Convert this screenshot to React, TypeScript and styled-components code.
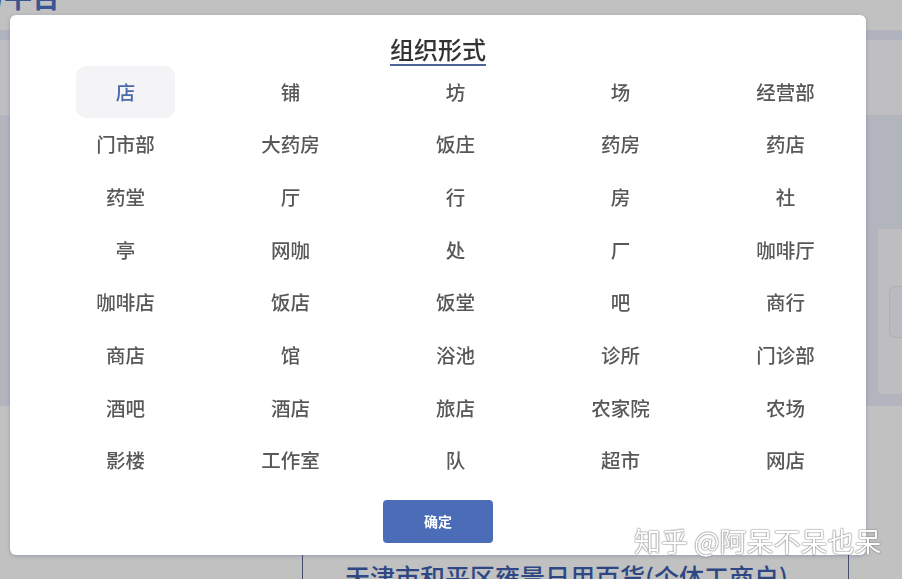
import { useState } from "react";
import styled, { createGlobalStyle } from "styled-components";

const GlobalStyle = createGlobalStyle`
  html, body {
    margin: 0;
    padding: 0;
    width: 902px;
    height: 579px;
    overflow: hidden;
    font-family: "Noto Sans CJK SC", "Noto Sans", sans-serif;
    background: #ffffff;
  }
`;

const options = [
  "店", "铺", "坊", "场", "经营部",
  "门市部", "大药房", "饭庄", "药房", "药店",
  "药堂", "厅", "行", "房", "社",
  "亭", "网咖", "处", "厂", "咖啡厅",
  "咖啡店", "饭店", "饭堂", "吧", "商行",
  "商店", "馆", "浴池", "诊所", "门诊部",
  "酒吧", "酒店", "旅店", "农家院", "农场",
  "影楼", "工作室", "队", "超市", "网店",
];

export default function App() {
  const [selected, setSelected] = useState("店");

  return (
    <>
      <GlobalStyle />
      <Page>
        <Header>
          <PlatformTitle>服务平台</PlatformTitle>
        </Header>
        <NavBand />
        <Toolbar />
        <Panel>
          <SideCard>
            <SideTab />
          </SideCard>
        </Panel>
        <Bottom>
          <ShopBox>
            <ShopName>天津市和平区雍景日用百货(个体工商户)</ShopName>
          </ShopBox>
        </Bottom>
      </Page>

      <Overlay>
        <Modal>
          <TitleRow>
            <Title>组织形式</Title>
          </TitleRow>
          <OptionGrid>
            {options.map((name) => (
              <Option
                key={name}
                $active={name === selected}
                onClick={() => setSelected(name)}
              >
                {name}
              </Option>
            ))}
          </OptionGrid>
          <Footer>
            <ConfirmButton>确定</ConfirmButton>
          </Footer>
        </Modal>
      </Overlay>

      <Watermark>知乎 @阿呆不呆也呆</Watermark>
    </>
  );
}

const Page = styled.div`
  display: flex;
  flex-direction: column;
  width: 902px;
  height: 579px;
  background: #ffffff;
`;

const Header = styled.div`
  height: 30px;
  display: flex;
  align-items: flex-end;
  overflow: hidden;
`;

const PlatformTitle = styled.div`
  margin-left: -52px;
  margin-bottom: 20px;
  font-size: 28px;
  line-height: 28px;
  font-weight: 700;
  color: #4d6fc0;
`;

const NavBand = styled.div`
  height: 10px;
  background: #e9edfb;
`;

const Toolbar = styled.div`
  height: 75px;
  background: #fdfdff;
  border-bottom: 1px solid #eef0f6;
`;

const Panel = styled.div`
  height: 290px;
  background: #ebeffc;
  display: flex;
  justify-content: flex-end;
  align-items: flex-end;
  padding-bottom: 12px;
  box-sizing: border-box;
`;

const SideCard = styled.div`
  width: 24px;
  height: 165px;
  background: #fcfcfe;
  border-radius: 4px 0 0 4px;
  display: flex;
  align-items: center;
  justify-content: flex-end;
`;

const SideTab = styled.div`
  width: 12px;
  height: 50px;
  border: 1px solid #e4e7f3;
  border-right: none;
  border-radius: 6px 0 0 6px;
  background: #f6f7fc;
`;

const Bottom = styled.div`
  flex: 1;
  display: flex;
  align-items: flex-end;
  padding-left: 302px;
`;

const ShopBox = styled.div`
  width: 547px;
  height: 150px;
  box-sizing: border-box;
  border-left: 1px solid #5c6688;
  border-right: 1px solid #5c6688;
  display: flex;
  align-items: flex-end;
  overflow: hidden;
`;

const ShopName = styled.div`
  margin-left: 42px;
  margin-bottom: -12px;
  font-size: 25px;
  line-height: 30px;
  font-weight: 500;
  color: #3d5fae;
  white-space: nowrap;
`;

const Overlay = styled.div`
  position: fixed;
  inset: 0;
  background: rgba(0, 0, 0, 0.245);
  display: flex;
  align-items: flex-start;
  padding: 15px 0 0 10px;
`;

const Modal = styled.div`
  width: 856px;
  height: 540px;
  background: #ffffff;
  border-radius: 6px;
  box-shadow: 0 1px 4px rgba(60, 80, 140, 0.35);
  display: flex;
  flex-direction: column;
  overflow: hidden;
`;

const TitleRow = styled.div`
  display: flex;
  justify-content: center;
  padding-top: 18px;
`;

const Title = styled.div`
  font-size: 24px;
  line-height: 31px;
  font-weight: 500;
  color: #333333;
  border-bottom: 2px solid #4e6399;
`;

const OptionGrid = styled.div`
  display: grid;
  grid-template-columns: repeat(5, 165px);
  grid-auto-rows: 52.7px;
  padding-left: 33px;
`;

const Option = styled.div<{ $active: boolean }>`
  justify-self: center;
  width: 99px;
  height: 52px;
  padding-bottom: 2px;
  box-sizing: border-box;
  display: flex;
  align-items: center;
  justify-content: center;
  border-radius: 10px;
  font-size: 19.5px;
  font-weight: 500;
  color: ${(p) => (p.$active ? "#4a6aab" : "#585858")};
  background: ${(p) => (p.$active ? "#f4f4f6" : "transparent")};
  cursor: pointer;
`;

const Footer = styled.div`
  display: flex;
  justify-content: center;
  padding-top: 12px;
`;

const ConfirmButton = styled.button`
  width: 110px;
  height: 43px;
  border: none;
  border-radius: 4px;
  background: #4b6db8;
  color: #ffffff;
  font-family: "Noto Sans CJK SC", sans-serif;
  font-size: 14px;
  font-weight: 700;
  cursor: pointer;
`;

const Watermark = styled.div`
  position: fixed;
  left: 634px;
  top: 522px;
  font-size: 27px;
  line-height: 38px;
  color: #ffffff;
  white-space: nowrap;
  text-shadow: 0 0 1px #777, 0 0 1px #777, 0 0 2px #888;
  opacity: 0.95;
`;
